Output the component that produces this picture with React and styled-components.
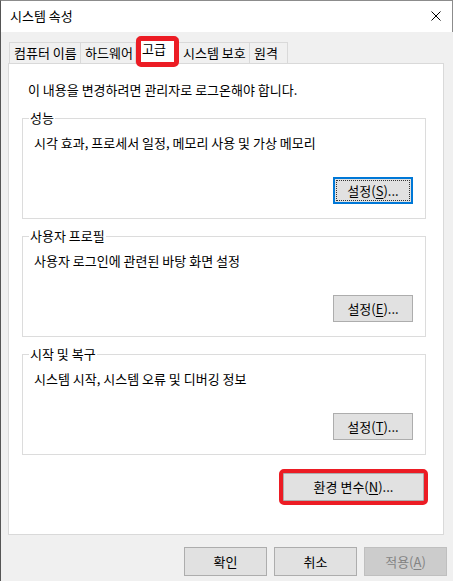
import React from 'react'
import styled, { createGlobalStyle, css } from 'styled-components'

const GlobalStyle = createGlobalStyle`
  html, body {
    margin: 0;
    padding: 0;
    background: #f0f0f0;
  }
  body {
    font-family: "Noto Sans CJK KR", "Noto Sans", sans-serif;
    font-size: 13px;
    color: #000;
  }
`

const Window = styled.div`
  width: 453px;
  height: 581px;
  box-sizing: border-box;
  border-left: 1px solid #555;
  border-top: 1px solid #8c8c8c;
  background: #f0f0f0;
  display: flex;
  flex-direction: column;
  overflow: hidden;
`

const TitleBar = styled.div`
  height: 29px;
  flex: none;
  background: #fff;
  border-right: 1px solid #8c8c8c;
  display: flex;
  align-items: center;
  justify-content: space-between;
  padding: 0 11px 2px 9px;
`

const Title = styled.span`
  line-height: 16px;
`

const CloseIcon = styled.svg`
  width: 10px;
  height: 10px;
`

const Body = styled.div`
  flex: 1;
  padding: 6px 9px 0 7px;
  display: flex;
  flex-direction: column;
`

const TabStrip = styled.div`
  height: 25px;
  display: flex;
  align-items: flex-end;
  padding-left: 2px;
`

const Tab = styled.div`
  box-sizing: border-box;
  width: ${(p) => p.$w}px;
  height: 21px;
  line-height: 19px;
  padding: 0 0 0 4px;
  border: 1px solid #d9d9d9;
  border-bottom: none;
  margin-left: -1px;
  background: #f0f0f0;
  white-space: nowrap;

  ${(p) =>
    p.$active &&
    css`
      position: relative;
      z-index: 2;
      height: 26px;
      line-height: 19px;
      margin: 0 0 -1px 0;
      padding: 0 0 0 5px;
      background: #fff;

      &::after {
        content: '';
        position: absolute;
        top: -3px;
        left: -1px;
        right: -1px;
        bottom: -3px;
        border: 5px solid #ec1c24;
        border-radius: 5px;
      }
    `}
`

const Panel = styled.div`
  position: relative;
  z-index: 1;
  box-sizing: border-box;
  height: 472px;
  background: #fff;
  border: 1px solid #d9d9d9;
  padding: 18px 17px 0 13px;
  display: flex;
  flex-direction: column;
`

const Notice = styled.p`
  margin: 0 0 12px 6px;
  line-height: 16px;
`

const Group = styled.fieldset`
  margin: 0 0 9px 0;
  padding: 9px 12px 14px 11px;
  border: 1px solid #dcdcdc;
  min-width: 0;
  display: flex;
  flex-direction: column;
`

const Legend = styled.legend`
  margin-left: -5px;
  padding: 0 1px;
  line-height: 16px;
`

const Description = styled.div`
  line-height: 16px;
`

const ButtonRow = styled.div`
  display: flex;
  justify-content: flex-end;
  margin-top: ${(p) => p.$top || 0}px;
  padding-right: ${(p) => p.$right || 0}px;
`

const Button = styled.div`
  position: relative;
  box-sizing: border-box;
  width: ${(p) => p.$w || 80}px;
  height: ${(p) => p.$h || 27}px;
  background: #e1e1e1;
  border: 1px solid #adadad;
  display: flex;
  align-items: center;
  justify-content: center;
  line-height: 16px;
  color: #000;

  u {
    text-underline-offset: 2px;
  }

  ${(p) =>
    p.$focused &&
    css`
      border: 2px solid #0078d7;
      &::after {
        content: '';
        position: absolute;
        inset: 1px;
        border: 1px dotted #333;
      }
    `}

  ${(p) =>
    p.$disabled &&
    css`
      background: #cccccc;
      border-color: #bfbfbf;
      color: #838383;
    `}
`

const Highlight = styled.div`
  position: relative;
  &::after {
    content: '';
    position: absolute;
    top: -4px;
    left: -4px;
    right: -4px;
    bottom: -4px;
    border: 4px solid #ec1c24;
    border-radius: 5px;
  }
`

const Footer = styled.div`
  margin-top: 12px;
  display: flex;
  justify-content: flex-end;
  gap: 7px;
  margin-right: -3px;
`

const groups = [
  { title: '성능', text: '시각 효과, 프로세서 일정, 메모리 사용 및 가상 메모리', key: 'S', focused: true },
  { title: '사용자 프로필', text: '사용자 로그인에 관련된 바탕 화면 설정', key: 'E' },
  { title: '시작 및 복구', text: '시스템 시작, 시스템 오류 및 디버깅 정보', key: 'T' },
]

const tabs = [
  { label: '컴퓨터 이름', w: 72 },
  { label: '하드웨어', w: 56 },
  { label: '고급', w: 43, active: true },
  { label: '시스템 보호', w: 72 },
  { label: '원격', w: 39 },
]

const App = () => {
  return (
    <>
      <GlobalStyle />
      <Window>
        <TitleBar>
          <Title>시스템 속성</Title>
          <CloseIcon viewBox="0 0 10 10">
            <path d="M0.5 0.5 L9.5 9.5 M9.5 0.5 L0.5 9.5" stroke="#000" strokeWidth="1" fill="none" />
          </CloseIcon>
        </TitleBar>
        <Body>
          <TabStrip>
            {tabs.map((t) => (
              <Tab key={t.label} $w={t.w} $active={t.active}>{t.label}</Tab>
            ))}
          </TabStrip>
          <Panel>
            <Notice>이 내용을 변경하려면 관리자로 로그온해야 합니다.</Notice>
            {groups.map((g) => (
              <Group key={g.title}>
                <Legend>{g.title}</Legend>
                <Description>{g.text}</Description>
                <ButtonRow $top={26}>
                  <Button $focused={g.focused}>
                    설정(<u>{g.key}</u>)...
                  </Button>
                </ButtonRow>
              </Group>
            ))}
            <ButtonRow $top={9} $right={2}>
              <Highlight>
                <Button $w={141} $h={28}>
                  환경 변수(<u>N</u>)...
                </Button>
              </Highlight>
            </ButtonRow>
          </Panel>
          <Footer>
            <Button $w={83} $h={29}>확인</Button>
            <Button $w={83} $h={29}>취소</Button>
            <Button $w={83} $h={29} $disabled>
              적용(<u>A</u>)
            </Button>
          </Footer>
        </Body>
      </Window>
    </>
  )
}

export default App
